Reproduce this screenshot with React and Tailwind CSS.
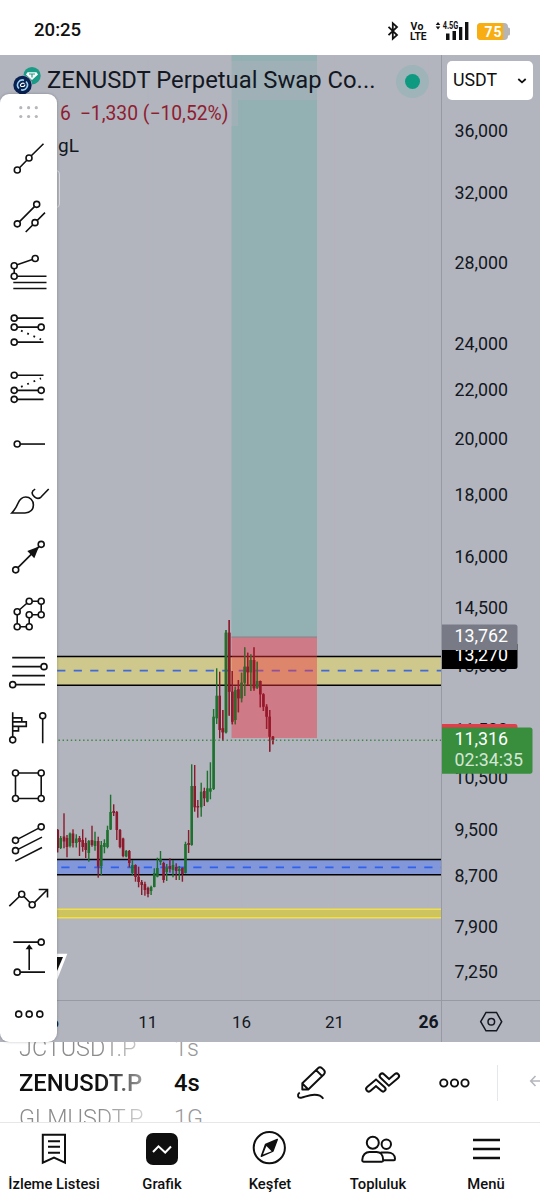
import React from "react";

// x, high, low, body top, body bottom, up (1) or down (0)
const candles = [
  [57.7, 829, 852.5, 830, 848, 0],
  [60.7, 836, 849, 838, 848, 1],
  [64, 813.3, 848.3, 836.5, 841.5, 0],
  [67, 835, 857.3, 838, 847, 0],
  [70, 832.5, 847.5, 833.5, 846, 1],
  [73, 829.3, 847.5, 833.5, 843, 0],
  [76.3, 834.3, 847.5, 838.5, 843, 1],
  [79.5, 836, 856, 838, 842, 0],
  [82.7, 829.3, 851.7, 840, 847, 0],
  [85.7, 837.7, 858, 843, 850, 0],
  [88.8, 840, 861.7, 841, 853, 1],
  [92, 825.7, 846.7, 840, 845, 0],
  [95, 831.7, 850.7, 841, 846, 1],
  [98.2, 836.7, 877.7, 841, 866.7, 0],
  [101.3, 841, 875, 845, 866, 1],
  [104.4, 839.3, 853.3, 843, 847, 1],
  [107.5, 825.7, 848.3, 830, 847, 1],
  [110.6, 794.7, 830, 812, 829.5, 1],
  [113.7, 804.3, 816, 811, 813, 0],
  [116.8, 811, 840, 812, 830, 0],
  [120, 829, 848.3, 830, 847, 0],
  [123.1, 837.7, 857.3, 838.5, 856, 0],
  [126.2, 850, 857.3, 851, 856.5, 1],
  [129.3, 850, 867.3, 851, 863, 0],
  [132.4, 860, 875, 865, 873, 1],
  [135.5, 864.3, 881.7, 865, 877, 0],
  [138.6, 866.7, 887.3, 876.7, 882, 0],
  [141.7, 880, 895, 882, 885, 0],
  [144.9, 881.7, 895.7, 884, 890, 0],
  [148, 886.7, 897.3, 888, 894, 0],
  [151.1, 885.7, 895, 887, 891, 1],
  [154.3, 868.3, 887.3, 873, 887, 1],
  [157.4, 857.7, 877.3, 868, 876.7, 1],
  [160.5, 851, 865, 859, 862, 1],
  [163.6, 861.7, 882.7, 863, 880, 0],
  [166.7, 864, 881, 868, 872, 1],
  [169.9, 858.3, 872.7, 866, 869, 0],
  [173, 860, 877.3, 865, 870, 1],
  [176.2, 863.3, 880, 867, 871, 0],
  [179.3, 866, 880, 869, 871, 1],
  [182.4, 867.3, 881.7, 868, 874, 0],
  [185.5, 841.7, 873.5, 844, 873, 1],
  [188.6, 830, 853, 843, 845, 0],
  [191.7, 764.3, 845.7, 786, 845, 1],
  [194.7, 765, 811.7, 786, 807.3, 0],
  [197.8, 800, 817.7, 806, 807.5, 0],
  [201.2, 782.7, 816.7, 791.7, 807.3, 1],
  [204.3, 787.7, 806, 791, 798.3, 0],
  [207.4, 770.7, 802.3, 788.3, 801.7, 1],
  [210.4, 762.3, 799.3, 788.3, 791.7, 1],
  [213.6, 709, 790, 716.7, 789, 1],
  [216.7, 668.3, 724, 695.7, 718.3, 1],
  [219.7, 671.7, 738.3, 695.7, 730, 0],
  [222.8, 710, 740.7, 728.3, 732.3, 0],
  [226, 630, 733.3, 632.7, 732.3, 1],
  [229.2, 620, 715.7, 632.7, 691.7, 0],
  [232.3, 671, 724.3, 691.7, 721.7, 0],
  [235.3, 686.7, 724.3, 690, 720, 1],
  [238.4, 680, 712.3, 689.3, 698.3, 0],
  [241.6, 672.7, 702.3, 682.7, 698.3, 1],
  [244.7, 647.3, 696, 666.7, 682.7, 1],
  [247.7, 652.7, 685, 666.7, 672.3, 0],
  [250.8, 654.3, 691, 660, 672.3, 1],
  [254, 647.3, 690.7, 660, 688.3, 0],
  [257.2, 661.7, 689, 681, 687.7, 1],
  [260.3, 680.7, 707.3, 681, 694.3, 0],
  [263.4, 693.3, 711, 694.3, 706.7, 0],
  [266.6, 704.3, 729, 706.7, 716.7, 0],
  [269.7, 710, 751.7, 716.7, 736.7, 0],
  [272.9, 736, 744.3, 736.7, 740, 0],
];

const prices = [
  ["36,000", 131],
  ["32,000", 192.5],
  ["28,000", 262.5],
  ["24,000", 344],
  ["22,000", 389.5],
  ["20,000", 439],
  ["18,000", 495],
  ["16,000", 556.5],
  ["14,500", 608],
  ["13,000", 665.5],
  ["11,500", 730],
  ["10,500", 777.5],
  ["9,500", 829.5],
  ["8,700", 876],
  ["7,900", 926.5],
  ["7,250", 971.5],
];

const Dot = ({ x, y, r = 3 }) => (
  <circle cx={x} cy={y} r={r} fill="#fff" />
);

// drawing tools, y is measured from the middle of each button
const tools = [
  {
    name: "Trend line",
    d: "M17.3 12.4L29 .5L43.5 -13.8",
    dots: [[17.3, 12.4], [29, 0.5]],
  },
  {
    name: "Trend channel",
    d: "M17.3 9.3L36.7 -10.2M25.7 17.5L45 -1.9",
    dots: [[17.3, 9.3], [36.7, -10.2], [35, 8.1]],
  },
  {
    name: "Fib channel",
    d: "M35.2 -13L14.2 -5.8V4.7H46.5M13.3 10.9H46.5M13.3 16.9H46.5",
    dots: [[35.2, -13], [14.2, -5.8], [14.2, 4.7]],
  },
  {
    name: "Long position",
    d: "M14.2 -10.4H43.5M14.2 -1.4H41.2M14.2 13.6H43.5",
    dotted: "M21 2.1L41 11",
    dots: [[14.2, -10.4], [14.2, -1.4], [41.2, -1.4], [14.2, 13.6]],
  },
  {
    name: "Short position",
    d: "M14.2 -10.3H43.5M14.2 4.8H41.2M14.2 13.8H43.5",
    dotted: "M21 1.3L41 -7.2",
    dots: [[14.2, -10.3], [14.2, 4.8], [41.2, 4.8], [14.2, 13.8]],
  },
  { name: "Horizontal ray", d: "M17.2 1.5H45", dots: [[17.2, 1.5]] },
  {
    name: "Brush",
    d: "M11.8 13.4H25C30.5 13.4 33.4 9.7 33.4 5.4C33.4 .8 30 -2.5 25.7 -2.5C21.8 -2.5 19.6 0 18 3.7C16.3 7.7 14.6 10.4 11.8 13.4ZM35.2 -10.4C31.5 -8.5 31 -5.5 34.5 -2.6C37 -.5 38.7 -.4 41 -2.5L48.7 -10.6",
    dots: [],
  },
  {
    name: "Arrow",
    d: "M15.7 13.3L41.2 -12.2",
    fill: "M39 -10L27.3 -5.5L34.3 1.8Z",
    dots: [[15.7, 13.3], [41.2, -12.2]],
  },
  {
    name: "Path",
    d: "M29.2 -12.3H41.2V1.2H29.2V13.2H17.2V-1.8Z",
    dots: [[29.2, -12.3], [41.2, -12.3], [41.2, 1.2], [29.2, 1.2], [29.2, 13.2], [17.2, 13.2], [17.2, -1.8]],
  },
  {
    name: "Fib retracement",
    d: "M12.2 -13.9H45M12.2 -4.9H44M12.2 4.1H45M12.7 13.1H45",
    dots: [[44, -4.9], [12.7, 13.1]],
  },
  {
    name: "Volume profile",
    d: "M12.7 11.3V-16.2M12.7 -10.7H21.8V-6.7M12.7 -6.7H26.3V-2.2H12.7M18.5 -2.2V2.3H12.7M42.7 -12.7V14.8",
    dots: [[12.7, 11.3], [42.7, -12.7]],
  },
  {
    name: "Rectangle",
    d: "M15.5 -12.6H41.2V13H15.5Z",
    dots: [[15.5, -12.6], [41.2, -12.6], [41.2, 13], [15.5, 13]],
  },
  {
    name: "Parallel channel",
    d: "M15.5 -2.2L41.2 -15.7M15.5 8.1L42 -5.4M15.3 18.6L42 4.9",
    dots: [[15.5, -2.2], [41.2, -15.7], [15.5, 8.1]],
  },
  {
    name: "Polyline",
    d: "M9.3 6.5L21.7 -5.3L32.2 5.2L47.5 -10M38.7 -10H47.5V-2",
    dots: [[21.7, -5.3], [32.2, 5.2]],
  },
  {
    name: "Price range",
    d: "M13.3 -14.4H41.2M17.2 15.6H45M29.2 13.4V-9",
    fill: "M29.2 -12.2L25.6 -7.3H32.8Z",
    dots: [[41.2, -14.4], [17.2, 15.6]],
  },
  { name: "More", d: "", dots: [[18.7, 0.6], [29.2, 0.6], [39.8, 0.6]] },
];

const StatusBar = () => (
  <div className="h-[55px] flex items-center justify-between pl-[34px] pr-[30px] pt-[7px] bg-white">
    <span className="text-[18.6px] font-medium text-[#111]">20:25</span>
    <svg width="124" height="22" viewBox="386 20 124 22">
      <path d="M388.5 26.8L397 35L392.8 38.8V23.2L397 27L388.5 35.2" fill="none" stroke="#111" strokeWidth="1.8" />
      <g fill="#111" fontFamily="Roboto" fontWeight="700">
        <text x="410.5" y="29.8" fontSize="10.5" textLength="13">Vo</text>
        <text x="410" y="39.6" fontSize="10.5" textLength="16.5" lengthAdjust="spacingAndGlyphs">LTE</text>
        <text x="442.7" y="29.2" fontSize="11" textLength="15.5" lengthAdjust="spacingAndGlyphs">4.5G</text>
      </g>
      <path d="M435.7 25L438 22L440.3 25ZM435.7 26.5L438 29.5L440.3 26.5Z" fill="#111" />
      <path d="M446 33.5H449.5V40H446ZM452.5 31H456V40H452.5ZM459 27H462.3V40H459ZM465 22H468.4V40H465Z" fill="#111" />
      <rect x="477" y="23" width="31" height="17" rx="4" fill="#b7b5b4" />
      <rect x="507" y="27.5" width="3" height="8" rx="1.5" fill="#b7b5b4" />
      <path d="M481 23H503V40H481Q477 40 477 36V27Q477 23 481 23Z" fill="#f8ae12" />
      <text x="484.5" y="36.7" fontSize="14" fontFamily="Roboto" fontWeight="700" fill="#fff" textLength="17">75</text>
    </svg>
  </div>
);

const Chart = () => (
  <svg className="block" width="540" height="987" viewBox="0 55 540 987" fontFamily="Roboto">
    <rect x="0" y="55" width="540" height="987" fill="#b2b5be" />

    {/* vertical grid */}
    <path d="M148 55V1000M241.5 55V1000M334.5 55V1000M428.5 55V1000" stroke="#b5b2bd" strokeWidth="1" />

    {/* zones */}
    <rect x="0" y="656.5" width="441" height="29" fill="#cec88d" />
    <path d="M0 656.5H441M0 685.3H441" stroke="#000" strokeWidth="1.6" />
    <path d="M57.2 670.7H441" stroke="#4169dc" strokeWidth="1.7" strokeDasharray="8.2 8.3" />
    <rect x="0" y="859.5" width="441" height="15" fill="#8197d9" />
    <path d="M0 859.5H441M0 874.7H441" stroke="#000" strokeWidth="1.6" />
    <path d="M61.3 867.3H441" stroke="#2f60ee" strokeWidth="1.7" strokeDasharray="8.2 8.3" />
    <rect x="0" y="909" width="441" height="9" fill="#cdc35f" />
    <path d="M0 909.2H441M0 917.8H441" stroke="#f1df49" strokeWidth="1.6" />

    {candles.map(([x, high, low, top, bottom, up]) => (
      <g key={x} fill={up ? "#1d702d" : "#8a1a2c"}>
        <rect x={x - 0.7} y={high} width="1.4" height={low - high} />
        <rect x={x - 1.3} y={top} width="2.6" height={bottom - top} />
      </g>
    ))}

    {/* position */}
    <rect x="231.5" y="55" width="85.5" height="582" fill="#089981" fillOpacity=".18" />
    <rect x="231.5" y="637" width="85.5" height="101" fill="#f23645" fillOpacity=".45" />
    <path d="M231.5 637H317" stroke="#80868c" strokeWidth="1" />
    {candles.slice(-17).map(([x, high, low, top, bottom, up]) => (
      <g key={x} fill={up ? "#2f6a2d" : "#8f1a2c"} fillOpacity=".75">
        <rect x={x - 0.7} y={high} width="1.4" height={low - high} />
        <rect x={x - 1.3} y={top} width="2.6" height={bottom - top} />
      </g>
    ))}
    <path d="M58.5 740.3H441" stroke="#3f8547" strokeWidth="1.4" strokeDasharray="1.4 2.7" />

    {/* watermark corner */}
    <path d="M50 953.7H67.3L57 980H50Z" fill="#fff" />
    <path d="M50 957H63L57 971H50Z" fill="#111" />

    {/* legend backdrop */}
    <path d="M0 61H378V100H238V126H0Z" fill="#b2b5be" fillOpacity=".4" />

    {/* axes */}
    <path d="M441.5 55V1042M0 1000.5H540" stroke="#979aa3" strokeWidth="1" />
    <g fontSize="17.8" fill="#131722">
      {prices.map(([label, y]) => (
        <text key={label} x="454.5" y={y + 6.2}>{label}</text>
      ))}
    </g>
    <g fontSize="17" fill="#131722" textAnchor="middle">
      <text x="54.3" y="1027.7">6</text>
      <text x="147.7" y="1027.7">11</text>
      <text x="241.5" y="1027.7">16</text>
      <text x="334.5" y="1027.7">21</text>
      <text x="428.5" y="1027.7" fontWeight="700" fontSize="17.6">26</text>
    </g>
    <path d="M480.7 1021.7L486 1012.5H496.5L501.7 1021.7L496.5 1030.8H486Z" fill="none" stroke="#131722" strokeWidth="1.5" />
    <circle cx="491.3" cy="1021.7" r="3.3" fill="none" stroke="#131722" strokeWidth="1.5" />

    {/* price tags */}
    <g fontSize="17.8" fill="#fff">
      <path d="M442 644H517.5V666.5Q517.5 669 515 669H442Z" fill="#000" />
      <text x="454.5" y="661.3">13,270</text>
      <path d="M442 624.5H515Q517.5 624.5 517.5 627V650H442Z" fill="#787b86" />
      <text x="454.5" y="642.2">13,762</text>
      <path d="M442 724H515Q517.5 724 517.5 727V740H442Z" fill="#e33d4c" />
      <path d="M442 727.5H530Q532.5 727.5 532.5 730V771Q532.5 773.7 530 773.7H442Z" fill="#388e3c" />
      <text x="454.5" y="745.2">11,316</text>
      <text x="454.5" y="766" fillOpacity=".8">02:34:35</text>
    </g>
  </svg>
);

const Legend = () => (
  <div className="absolute left-0 top-0 w-[441px] text-[#131722]">
    <div className="flex items-center h-[52px] pl-[13px]">
      <svg width="28" height="28" viewBox="13 67 28 28" className="shrink-0">
        <circle cx="32" cy="75.7" r="8.7" fill="#1b9a85" />
        <path d="M27.5 72.2H36.5L38 74.5L32 80L26 74.5Z" fill="#fff" />
        <path d="M29 74H35M32 74V77.5" stroke="#1b9a85" strokeWidth="1.2" />
        <circle cx="22.5" cy="85" r="9.8" fill="#b2b5be" />
        <circle cx="22.5" cy="85" r="9.2" fill="#08204f" />
        <path d="M19 88.5A5 5 0 0 1 24 80.2M26 81.5A5 5 0 0 1 21 89.8" fill="none" stroke="#9fd1f2" strokeWidth="1.6" />
        <path d="M20.5 86A2.5 2.5 0 0 1 24.5 83.6M20.5 86.5H23.5Q25 86 24.8 84.5" fill="none" stroke="#fff" strokeWidth="1.2" />
      </svg>
      <span className="ml-[6px] w-[331px] shrink-0 whitespace-nowrap text-[23.8px]">ZENUSDT Perpetual Swap Co...</span>
      <span className="ml-[18px] flex size-[33px] shrink-0 items-center justify-center rounded-full bg-[#9eb4b8]">
        <span className="size-[15px] rounded-full bg-[#0d9a81]" />
      </span>
    </div>
    <div className="mt-[1px] flex h-[12px] items-center gap-[9px] pl-[60px] text-[19.3px] text-[#8f1d30]">
      <span>6</span>
      <span className="whitespace-nowrap">−1,330 (−10,52%)</span>
    </div>
    <div className="mt-[13px] flex h-[26px] items-center pl-[58px] text-[19px]">gL</div>
    <div className="mt-[11px] h-[38px] w-[60px] rounded-[4px] border border-[#d8dae0]" />
  </div>
);

const Toolbar = () => (
  <div className="absolute left-0 top-[39px] flex h-[948px] w-[57px] flex-col overflow-hidden rounded-[9px] bg-white shadow-[0_0_3px_rgba(0,0,0,0.25)]">
    <svg className="block shrink-0" width="57" height="34.7" viewBox="0 94 57 34.7" fill="#b5b7bd">
      {[20.8, 28.6, 36.3].map((x) => (
        <g key={x}>
          <circle cx={x} cy="107.7" r="1.6" />
          <circle cx={x} cy="116.5" r="1.6" />
        </g>
      ))}
    </svg>
    {tools.map((tool) => (
      <button key={tool.name} aria-label={tool.name} className="block h-[57.1px] shrink-0">
        <svg width="57" height="57.1" viewBox="0 -28.55 57 57.1" fill="none" stroke="#111" strokeWidth="1.6">
          <path d={tool.d} />
          {tool.dotted && <path d={tool.dotted} strokeWidth="1.8" strokeDasharray="1.8 5" />}
          {tool.fill && <path d={tool.fill} fill="#111" stroke="none" />}
          {tool.dots.map(([x, y]) => (
            <Dot key={`${x},${y}`} x={x} y={y} />
          ))}
        </svg>
      </button>
    ))}
  </div>
);

const SymbolBar = () => (
  <div className="flex h-[81px] shrink-0 overflow-hidden border-b border-[#e6e7ea] bg-white">
    <div className="flex w-[174px] shrink-0 flex-col justify-center pl-[19px] pt-[3px] leading-[35px] [mask-image:linear-gradient(to_right,#000_100px,transparent_172px)]">
      <span className="text-[23.4px] font-light text-[#8c8c8c]">JCTUSDT.P</span>
      <span className="text-[23.8px] font-medium text-[#0f0f0f]">ZENUSDT.P</span>
      <span className="text-[23.4px] font-light text-[#8c8c8c]">GLMUSDT.P</span>
    </div>
    <div className="flex w-[110px] shrink-0 flex-col justify-center pt-[3px] leading-[35px]">
      <span className="text-[23.4px] font-light text-[#999]">1s</span>
      <span className="text-[23.8px] font-medium text-[#0f0f0f]">4s</span>
      <span className="text-[23.4px] font-light text-[#999]">1G</span>
    </div>
    <svg className="block shrink-0" width="256" height="80" viewBox="284 1042 256 80" fill="none" stroke="#0f0f0f" strokeWidth="1.9">
      <path d="M302.3 1089.5V1083.3L318 1068.2Q320 1066.4 322 1068.2L324 1070.2Q325.7 1072.2 324 1074.2L308.3 1089.5ZM302.3 1083.3L308.3 1089.5M316 1070L322.2 1076.2" strokeLinejoin="round" />
      <path d="M299.7 1092.5C297 1094.5 297.5 1098.5 301.5 1097.7C306 1096.5 309.5 1094.8 314.5 1094.8C319 1094.8 321.5 1096 323.3 1098.7" />
      <path d="M368.7 1089L376 1082.8L383 1089" strokeWidth="7" strokeLinecap="round" strokeLinejoin="miter" />
      <path d="M368.7 1089L376 1082.8L383 1089" stroke="#fff" strokeWidth="3" strokeLinecap="round" />
      <path d="M382.2 1076L389 1082.4L396.5 1076" strokeWidth="7" strokeLinecap="round" strokeLinejoin="miter" />
      <path d="M382.2 1076L389 1082.4L396.5 1076" stroke="#fff" strokeWidth="3" strokeLinecap="round" />
      <circle cx="443.8" cy="1083" r="3.6" />
      <circle cx="454.5" cy="1083" r="3.6" />
      <circle cx="465" cy="1083" r="3.6" />
      <path d="M497.5 1065V1101" stroke="#e6e7ea" strokeWidth="1" />
      <path d="M540 1081H531M535.5 1076L530.7 1081L535.5 1086" stroke="#b5b7bd" strokeWidth="1.6" />
    </svg>
  </div>
);

const NavItem = ({ label, children }) => (
  <a className="flex flex-col items-center pt-[8px]">
    <svg width="36" height="36" viewBox="-18 -18 36 36" fill="none" stroke="#0f0f0f" strokeWidth="2">
      {children}
    </svg>
    <span className="mt-[6px] whitespace-nowrap text-[14.8px] leading-[22px] font-medium text-[#0f0f0f]">{label}</span>
  </a>
);

const BottomNav = () => (
  <nav className="grid h-[77px] grid-cols-5 bg-white">
    <NavItem label="İzleme Listesi">
      <path d="M-11.2 -14.2H11V13.7L0 8.7L-11.2 13.7ZM-6 -7.7H6M-6 -2.2H6M-6 3.7H6" />
    </NavItem>
    <NavItem label="Grafik">
      <rect x="-16" y="-16" width="32" height="32" rx="7" fill="#0f0f0f" stroke="none" />
      <path d="M-9 3L-3.5 -2.7L3.2 3.5L9 -2.5" stroke="#fff" />
    </NavItem>
    <NavItem label="Keşfet">
      <circle cx="-.7" cy="-1.3" r="15.6" />
      <path d="M7.3 -9.5L-4.5 -4.5L-8.7 7.3L3 2Z" fill="#0f0f0f" stroke="#0f0f0f" strokeWidth="1.4" strokeLinejoin="round" />
      <path d="M-3.6 -3L-7 5.6L1.6 2.2Z" fill="#fff" stroke="none" />
    </NavItem>
    <NavItem label="Topluluk">
      <circle cx="-5.2" cy="-6.3" r="6" />
      <circle cx="8.3" cy="-4.7" r="4.7" />
      <path d="M-15.8 11.3C-15.8 5.5 -12 3 -8.5 3H-1.5C2 3 5.2 5.5 5.2 11.3Q5.2 12.7 3.8 12.7H-14.4Q-15.8 12.7 -15.8 11.3ZM2.5 3.5H9.5C14 3.5 17 6 17 9.8Q17 11.3 16 11.3H5" />
    </NavItem>
    <NavItem label="Menü">
      <path d="M-13 -9H14M-13 0H14M-13 9H14" strokeWidth="2.5" />
    </NavItem>
  </nav>
);

const App = () => {
  return (
    <div className="flex h-[1200px] w-[540px] flex-col overflow-hidden bg-white font-[Roboto,sans-serif]">
      <StatusBar />
      <main className="relative h-[987px] shrink-0">
        <Chart />
        <Legend />
        <button className="absolute right-[7px] top-[6px] flex h-[39px] w-[86px] items-center justify-between rounded-[5px] bg-white pl-[6px] pr-[6px] text-[17.8px] text-[#0f0f0f]">
          USDT
          <svg width="10" height="8" viewBox="0 0 10 8" fill="none" stroke="#0f0f0f" strokeWidth="1.8">
            <path d="M1.3 2L5 5.3L8.7 2" />
          </svg>
        </button>
        <Toolbar />
      </main>
      <SymbolBar />
      <BottomNav />
    </div>
  );
};

export default App;
